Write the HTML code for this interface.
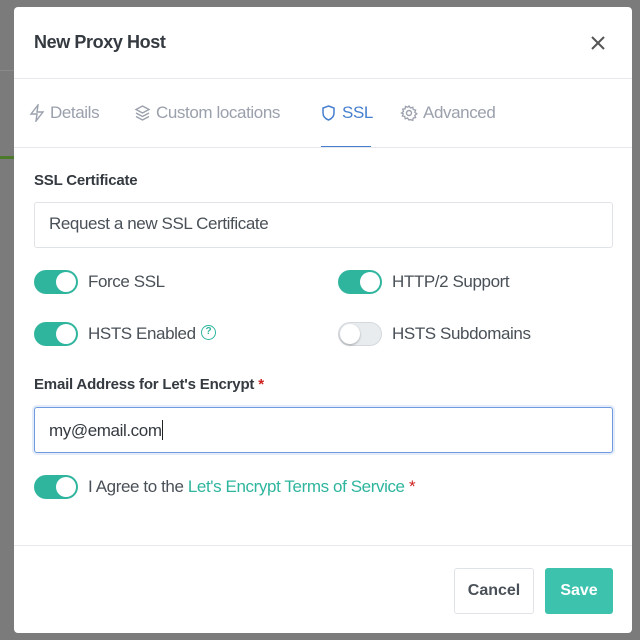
<!DOCTYPE html>
<html><head><style>
*{box-sizing:border-box;margin:0;padding:0}
body{width:640px;height:640px;background:#7b7b7b;position:relative;overflow:hidden;font-family:"Liberation Sans",sans-serif;color:#495057}
.abs{position:absolute}
.modal{left:14px;top:7px;width:618px;height:626px;background:#fff;border-radius:4px}
.t{position:absolute;white-space:nowrap;font-size:17px;letter-spacing:-0.4px}
.tog{position:absolute;width:44px;height:24px;border-radius:12px;background:#2fb59e}
.tog::after{content:"";position:absolute;right:2px;top:2px;width:20px;height:20px;border-radius:50%;background:#fff}
.tog.off{background:#e9ecef;border:1px solid #d5d9de}
.tog.off::after{left:1px;right:auto;top:1px;box-shadow:0 1px 2px rgba(0,0,0,.3)}
.inp{position:absolute;left:20px;width:579px;height:46px;border:1px solid #dfe3e8;border-radius:3px}
.tab{color:#9aa0ac}
</style></head><body>
<div class="abs" style="left:0;top:70px;width:14px;height:1px;background:#8a8a8a"></div>
<div class="abs" style="left:0;top:156px;width:14px;height:3px;background:#4a7a2a"></div>
<div class="abs modal">
  <div class="t" style="left:20px;top:25px;font-weight:bold;font-size:18px;color:#343a40">New Proxy Host</div>
  <svg class="abs" style="left:576px;top:28px" width="16" height="16" viewBox="0 0 16 16"><path d="M2 2L14 14M14 2L2 14" stroke="#555" stroke-width="2"/></svg>
  <div class="abs" style="left:0;top:71px;width:618px;height:1px;background:#e6e8ec"></div>
  <svg class="abs" style="left:15px;top:97px" width="16" height="18" viewBox="0 0 16 18"><path d="M9 1L2 10h6l-1 7 7-9H8z" fill="none" stroke="#9aa0ac" stroke-width="1.4"/></svg>
  <div class="t tab" style="left:36px;top:96px">Details</div>
  <svg class="abs" style="left:120px;top:97px" width="17" height="18" viewBox="0 0 17 18"><path d="M8.5 2L15 5.5 8.5 9 2 5.5z M2 9l6.5 3.5L15 9 M2 12.5l6.5 3.5 6.5-3.5" fill="none" stroke="#9aa0ac" stroke-width="1.4"/></svg>
  <div class="t tab" style="left:142px;top:96px">Custom locations</div>
  <svg class="abs" style="left:307px;top:97px" width="15" height="18" viewBox="0 0 15 18"><path d="M7.5 2L13 4v5c0 4-3 6-5.5 7C5 15 2 13 2 9V4z" fill="none" stroke="#467fcf" stroke-width="1.5"/></svg>
  <div class="t" style="left:328px;top:96px;color:#467fcf">SSL</div>
  <div class="abs" style="left:307px;top:139px;width:50px;height:2px;background:#467fcf"></div>
  <svg class="abs" style="left:386px;top:97px" width="18" height="18" viewBox="0 0 18 18"><circle cx="9" cy="9" r="2.5" fill="none" stroke="#9aa0ac" stroke-width="1.4"/><path d="M9 2l1.5 2 2.3-.8.4 2.4 2.4.4-.8 2.3 2 1.5-2 1.5.8 2.3-2.4.4-.4 2.4-2.3-.8L9 16l-1.5-2-2.3.8-.4-2.4-2.4-.4.8-2.3L1.5 9l2-1.5-.8-2.3 2.4-.4.4-2.4 2.3.8z" fill="none" stroke="#9aa0ac" stroke-width="1.3"/></svg>
  <div class="t tab" style="left:409px;top:96px">Advanced</div>
  <div class="abs" style="left:0;top:140px;width:618px;height:1px;background:#e6e8ec"></div>

  <div class="t" style="left:20px;top:165px;font-weight:bold;font-size:15px;color:#343a40;letter-spacing:-0.2px">SSL Certificate</div>
  <div class="inp" style="top:195px"></div>
  <div class="t" style="left:35px;top:207px">Request a new SSL Certificate</div>

  <div class="tog" style="left:20px;top:263px"></div>
  <div class="t" style="left:74px;top:265px">Force SSL</div>
  <div class="tog" style="left:324px;top:263px"></div>
  <div class="t" style="left:378px;top:265px">HTTP/2 Support</div>
  <div class="tog" style="left:20px;top:315px"></div>
  <div class="t" style="left:74px;top:317px">HSTS Enabled</div>
  <div class="abs" style="left:187px;top:318px;width:15px;height:15px;border:1.5px solid #2fb59e;border-radius:50%;color:#2fb59e;font-size:10px;text-align:center;line-height:12px;font-weight:bold">?</div>
  <div class="tog off" style="left:324px;top:315px"></div>
  <div class="t" style="left:378px;top:317px">HSTS Subdomains</div>

  <div class="t" style="left:20px;top:369px;font-weight:bold;font-size:15px;color:#343a40;letter-spacing:-0.2px">Email Address for Let's Encrypt <span style="color:#cd201f">*</span></div>
  <div class="inp" style="top:400px;border-color:#6f9ae0;box-shadow:0 0 0 2px rgba(70,127,207,.15)"></div>
  <div class="t" style="left:35px;top:413px;color:#343a40">my@email.com<span style="display:inline-block;width:1px;height:20px;background:#222;vertical-align:-4px"></span></div>

  <div class="tog" style="left:20px;top:468px"></div>
  <div class="t" style="left:74px;top:470px">I Agree to the <span style="color:#2fb59e">Let's Encrypt Terms of Service</span> <span style="color:#cd201f">*</span></div>

  <div class="abs" style="left:0;top:538px;width:618px;height:1px;background:#e6e8ec"></div>
  <div class="abs" style="left:440px;top:561px;width:80px;height:46px;border:1px solid #dfe3e8;border-radius:3px;font-weight:bold;font-size:16px;color:#495057;text-align:center;line-height:44px">Cancel</div>
  <div class="abs" style="left:531px;top:561px;width:68px;height:46px;background:#3cc2ad;border-radius:3px;font-weight:bold;font-size:16px;color:#fff;text-align:center;line-height:46px">Save</div>
</div>
</body></html>
